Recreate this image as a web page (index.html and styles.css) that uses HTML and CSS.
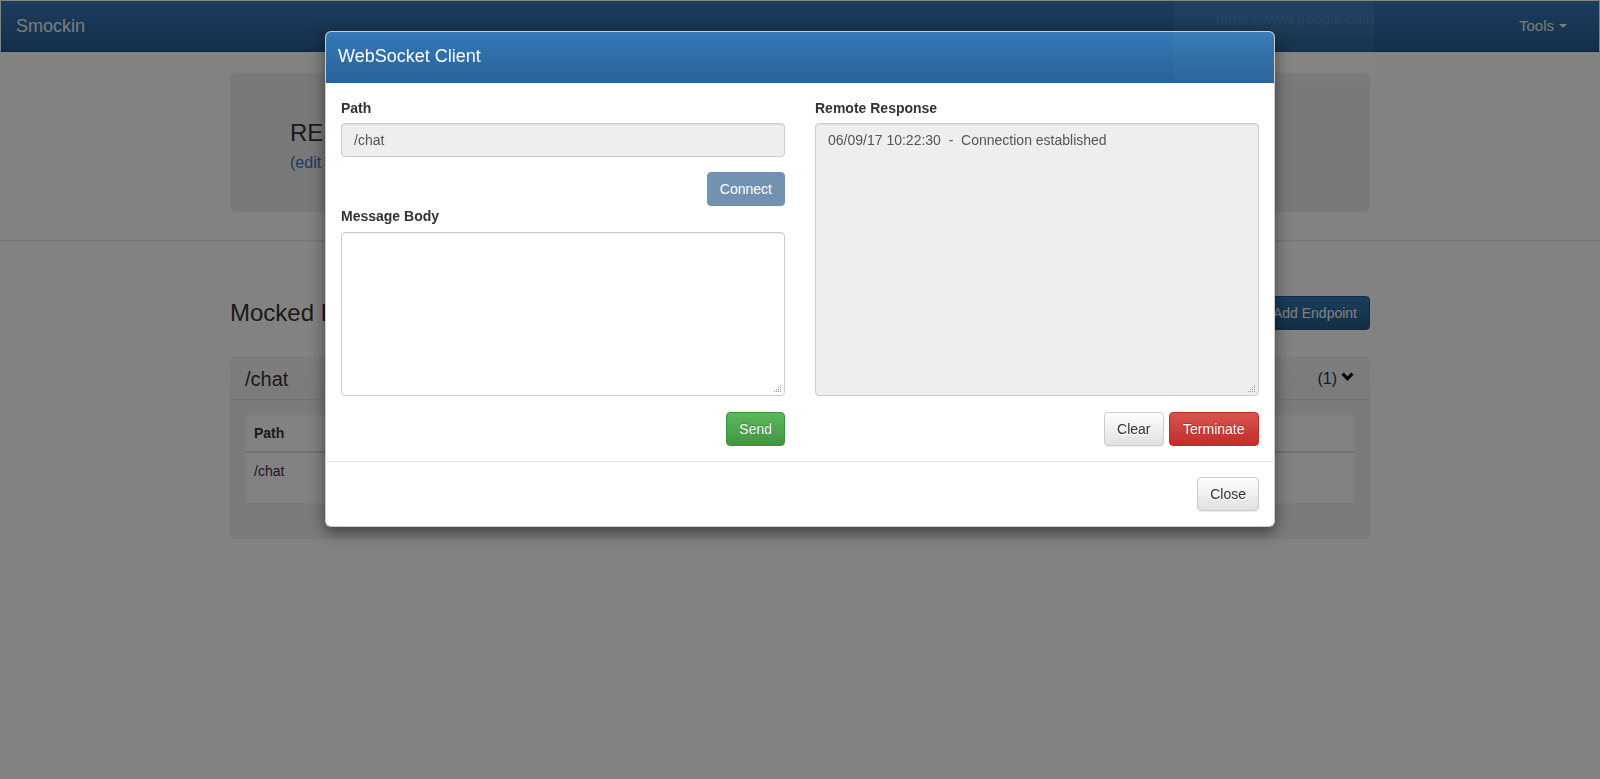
FILE: index.html
```html
<!DOCTYPE html>
<html lang="en">
<head>
<meta charset="utf-8">
<title>Smockin</title>
<link rel="stylesheet" href="styles.css">
</head>
<body>
<nav class="navbar">
  <a class="brand" href="#">Smockin</a>
  <div class="nav-right">
    <a class="tools" href="#">Tools <span class="caret"></span></a>
  </div>
</nav>

<header class="top-section">
  <div class="container">
    <div class="jumbotron">
      <h2 class="jumbo-title">RESTful Mock Server</h2>
      <a class="jumbo-link" href="#">(edit settings)</a>
    </div>
  </div>
</header>

<main class="container">
  <div class="section-head">
    <h2 class="section-title">Mocked Responses</h2>
    <button class="btn btn-primary">Add Endpoint</button>
  </div>

  <div class="panel">
    <div class="panel-heading">
      <span class="panel-title">/chat</span>
      <span class="panel-meta">
        <span class="count">(1)</span>
        <svg class="chev" width="13" height="9" viewBox="0 0 13 9"><polyline points="1.6,1.6 6.5,6.6 11.4,1.6" fill="none" stroke="#111" stroke-width="3.2" stroke-linecap="butt" stroke-linejoin="miter"/></svg>
      </span>
    </div>
    <div class="panel-body">
      <table class="table">
        <thead>
          <tr><th class="c-path">Path</th><th class="c-method">Method</th><th class="c-type">Type</th><th class="c-act"></th></tr>
        </thead>
        <tbody>
          <tr><td>/chat</td><td>WS</td><td>WebSocket</td><td></td></tr>
        </tbody>
      </table>
    </div>
  </div>
</main>

<div class="backdrop"></div>

<div class="modal">
  <div class="modal-header">
    <h4 class="modal-title">WebSocket Client</h4>
  </div>
  <div class="modal-body">
    <div class="col">
      <label class="lbl">Path</label>
      <input class="form-control" type="text" value="/chat" disabled>
      <div class="btn-row mt15">
        <button class="btn btn-primary" disabled>Connect</button>
      </div>
      <label class="lbl lbl-msg">Message Body</label>
      <div class="ta-wrap">
        <textarea class="form-control msg"></textarea>
        <svg class="grip" width="8" height="8" viewBox="0 0 8 8"><g fill="#9a9a9a"><rect x="6" y="0" width="1" height="1"/><rect x="4" y="2" width="1" height="1"/><rect x="6" y="2" width="1" height="1"/><rect x="2" y="4" width="1" height="1"/><rect x="4" y="4" width="1" height="1"/><rect x="6" y="4" width="1" height="1"/><rect x="0" y="6" width="1" height="1"/><rect x="2" y="6" width="1" height="1"/><rect x="4" y="6" width="1" height="1"/><rect x="6" y="6" width="1" height="1"/></g></svg>
      </div>
      <div class="btn-row mt16">
        <button class="btn btn-success">Send</button>
      </div>
    </div>
    <div class="col">
      <label class="lbl">Remote Response</label>
      <div class="ta-wrap">
        <textarea class="form-control resp" readonly>06/09/17 10:22:30  -  Connection established</textarea>
        <svg class="grip" width="8" height="8" viewBox="0 0 8 8"><g fill="#9a9a9a"><rect x="6" y="0" width="1" height="1"/><rect x="4" y="2" width="1" height="1"/><rect x="6" y="2" width="1" height="1"/><rect x="2" y="4" width="1" height="1"/><rect x="4" y="4" width="1" height="1"/><rect x="6" y="4" width="1" height="1"/><rect x="0" y="6" width="1" height="1"/><rect x="2" y="6" width="1" height="1"/><rect x="4" y="6" width="1" height="1"/><rect x="6" y="6" width="1" height="1"/></g></svg>
      </div>
      <div class="btn-row mt16">
        <button class="btn btn-default">Clear</button>
        <button class="btn btn-danger btn-wide">Terminate</button>
      </div>
    </div>
  </div>
  <div class="modal-footer">
    <button class="btn btn-default">Close</button>
  </div>
</div>

<div class="ghost">
  <div class="ghost-bar">
    <svg width="14" height="14" viewBox="0 0 14 14"><circle cx="7" cy="7" r="6" fill="none" stroke="currentColor" stroke-width="1.4"/><rect x="6.3" y="6" width="1.4" height="4.5" fill="currentColor"/><rect x="6.3" y="3.3" width="1.4" height="1.5" fill="currentColor"/></svg>
    <svg width="12" height="14" viewBox="0 0 12 14"><path d="M3 6V4.5a3 3 0 0 1 6 0V6" fill="none" stroke="currentColor" stroke-width="1.6"/><rect x="1" y="6" width="10" height="7.5" rx="1" fill="currentColor"/></svg>
    <span class="ghost-url">https://www.google.co.u</span>
  </div>
</div>
</body>
</html>
```

FILE: styles.css
```css
html, body {
  margin: 0;
  padding: 0;
}

body {
  font-family: "Liberation Sans", Arial, sans-serif;
  font-size: 14px;
  line-height: 20px;
  color: #333;
  background: #fff;
  overflow: hidden;
}

/* ---------- navbar ---------- */
.navbar {
  height: 50px;
  border: 1px solid #fff;
  border-bottom-color: #204d74;
  background: linear-gradient(to bottom, #3579b9 0%, #275c92 100%);
  display: flex;
  align-items: center;
  justify-content: space-between;
}

.brand {
  padding: 0 15px;
  font-size: 18px;
  line-height: 20px;
  color: #f4f4f4;
  text-decoration: none;
}

.nav-right {
  padding-right: 17px;
}

.tools {
  padding: 0 15px;
  font-size: 15px;
  line-height: 20px;
  color: #f0f0f0;
  text-decoration: none;
  display: flex;
  align-items: center;
}

.caret {
  display: inline-block;
  width: 0;
  height: 0;
  margin-left: 5px;
  border-top: 4px solid #f0f0f0;
  border-left: 4px solid transparent;
  border-right: 4px solid transparent;
}

/* ---------- page ---------- */
.container {
  width: 1140px;
  margin: 0 auto;
}

.top-section {
  padding: 21px 0 28px;
  border-bottom: 1px solid #e2e2e2;
}

.jumbotron {
  background: #eee;
  border-radius: 6px;
  padding: 47px 60px 40px;
}

.jumbo-title {
  margin: 0 0 7px;
  font-size: 24px;
  line-height: 26px;
  font-weight: normal;
  color: #333;
}

.jumbo-link {
  display: block;
  font-size: 16px;
  line-height: 19px;
  color: #337ab7;
  text-decoration: none;
}

.section-head {
  margin-top: 55px;
  display: flex;
  align-items: center;
  justify-content: space-between;
}

.section-title {
  margin: 0;
  font-size: 24px;
  line-height: 26px;
  font-weight: normal;
  color: #333;
}

.panel {
  margin-top: 27px;
  border: 1px solid #efefef;
  border-radius: 4px;
  background: #f2f2f2;
}

.panel-heading {
  padding: 10px 15px 9px 14px;
  border-bottom: 1px solid #ddd;
  border-radius: 3px 3px 0 0;
  background: linear-gradient(to bottom, #f6f6f6, #f1f1f1);
  display: flex;
  align-items: center;
  justify-content: space-between;
}

.panel-title {
  font-size: 20px;
  line-height: 22px;
  color: #333;
}

.panel-meta {
  display: flex;
  align-items: center;
  gap: 4px;
}

.count {
  font-size: 16px;
  line-height: 22px;
  color: #1f3a5c;
}

.chev {
  display: block;
  margin-bottom: 6px;
}

.panel-body {
  padding: 15px;
}

.table {
  width: 100%;
  border-collapse: collapse;
  background: #fff;
  margin-bottom: 20px;
}

.table th {
  text-align: left;
  padding: 8px;
  line-height: 20px;
  border-bottom: 2px solid #ddd;
}

.table td {
  padding: 8px;
  height: 34px;
  vertical-align: top;
  line-height: 20px;
}

.c-path { width: 300px; }
.c-method { width: 200px; }
.c-type { width: 300px; }

/* ---------- buttons ---------- */
.btn {
  box-sizing: border-box;
  height: 34px;
  padding: 6px 12px;
  font-family: "Liberation Sans", Arial, sans-serif;
  font-size: 14px;
  line-height: 20px;
  border: 1px solid transparent;
  border-radius: 4px;
  cursor: pointer;
  white-space: nowrap;
}

.btn-wide {
  padding-left: 13.5px;
  padding-right: 13.5px;
}

.btn-default {
  color: #333;
  background: linear-gradient(to bottom, #fff 0%, #e0e0e0 100%);
  border-color: #ccc;
  text-shadow: 0 1px 0 #fff;
  box-shadow: inset 0 1px 0 rgba(255, 255, 255, .15), 0 1px 1px rgba(0, 0, 0, .075);
}

.btn-primary {
  color: #fff;
  background: linear-gradient(to bottom, #337ab7 0%, #265a88 100%);
  border-color: #245580;
  text-shadow: 0 -1px 0 rgba(0, 0, 0, .2);
}

.btn-primary[disabled] {
  background: #265a88;
  border-color: #245580;
  opacity: .65;
  text-shadow: none;
}

.btn-success {
  color: #fff;
  background: linear-gradient(to bottom, #5cb85c 0%, #419641 100%);
  border-color: #3e8f3e;
  text-shadow: 0 -1px 0 rgba(0, 0, 0, .2);
}

.btn-danger {
  color: #fff;
  background: linear-gradient(to bottom, #d9534f 0%, #c12e2a 100%);
  border-color: #b92c28;
  text-shadow: 0 -1px 0 rgba(0, 0, 0, .2);
}

/* ---------- modal ---------- */
.backdrop {
  position: fixed;
  inset: 0;
  background: rgba(0, 0, 0, .49);
  z-index: 1040;
}

.modal {
  position: absolute;
  top: 31px;
  left: 0;
  right: 0;
  margin: 0 auto;
  width: 948px;
  background: #fff;
  border: 1px solid rgba(0, 0, 0, .2);
  border-radius: 6px;
  box-shadow: 0 5px 15px rgba(0, 0, 0, .5);
  z-index: 1050;
}

.modal-header {
  padding: 12px 12px 13px;
  border-radius: 5px 5px 0 0;
  border-bottom: 1px solid #2a6196;
  background: linear-gradient(to bottom, #347ab7 0%, #29629a 100%);
  color: #fff;
}

.modal-title {
  margin: 0;
  font-size: 18px;
  line-height: 25px;
  font-weight: normal;
}

.modal-body {
  padding: 15px;
  display: grid;
  grid-template-columns: 1fr 1fr;
  column-gap: 30px;
}

.col {
  display: flex;
  flex-direction: column;
  min-width: 0;
}

.lbl {
  display: block;
  font-weight: bold;
  line-height: 20px;
  margin-bottom: 5px;
}

.lbl-msg {
  margin-bottom: 6px;
}

.form-control {
  box-sizing: border-box;
  display: block;
  width: 100%;
  height: 34px;
  margin: 0;
  padding: 6px 12px;
  font-family: "Liberation Sans", Arial, sans-serif;
  font-size: 14px;
  line-height: 20px;
  color: #555;
  background: #fff;
  border: 1px solid #ccc;
  border-radius: 4px;
  box-shadow: inset 0 1px 1px rgba(0, 0, 0, .075);
  outline: none;
}

input.form-control[disabled] {
  background: #eee;
  color: #555;
  -webkit-text-fill-color: #555;
  opacity: 1;
}

.ta-wrap {
  position: relative;
}

.grip {
  position: absolute;
  right: 3px;
  bottom: 3px;
  display: block;
}

.msg {
  height: 164px;
  resize: none;
}

.resp {
  height: 273px;
  background: #eee;
  resize: none;
  white-space: pre-wrap;
}

.btn-row {
  display: flex;
  justify-content: flex-end;
  gap: 5px;
}

.mt15 { margin-top: 15px; }
.mt16 { margin-top: 16px; }

.modal-footer {
  padding: 15px;
  border-top: 1px solid #e5e5e5;
  display: flex;
  justify-content: flex-end;
}

/* ---------- faint overlay artifact ---------- */
.ghost {
  position: absolute;
  top: 0;
  left: 1174px;
  width: 200px;
  height: 82px;
  background: rgba(255, 255, 255, .02);
  overflow: hidden;
  z-index: 1100;
  pointer-events: none;
}

.ghost-bar {
  height: 37px;
  display: flex;
  align-items: center;
  gap: 6px;
  padding-left: 26px;
  color: rgba(255, 255, 255, .045);
  background: rgba(255, 255, 255, .012);
}

.ghost-url {
  margin-left: 4px;
  font-size: 15px;
  white-space: nowrap;
}
```
